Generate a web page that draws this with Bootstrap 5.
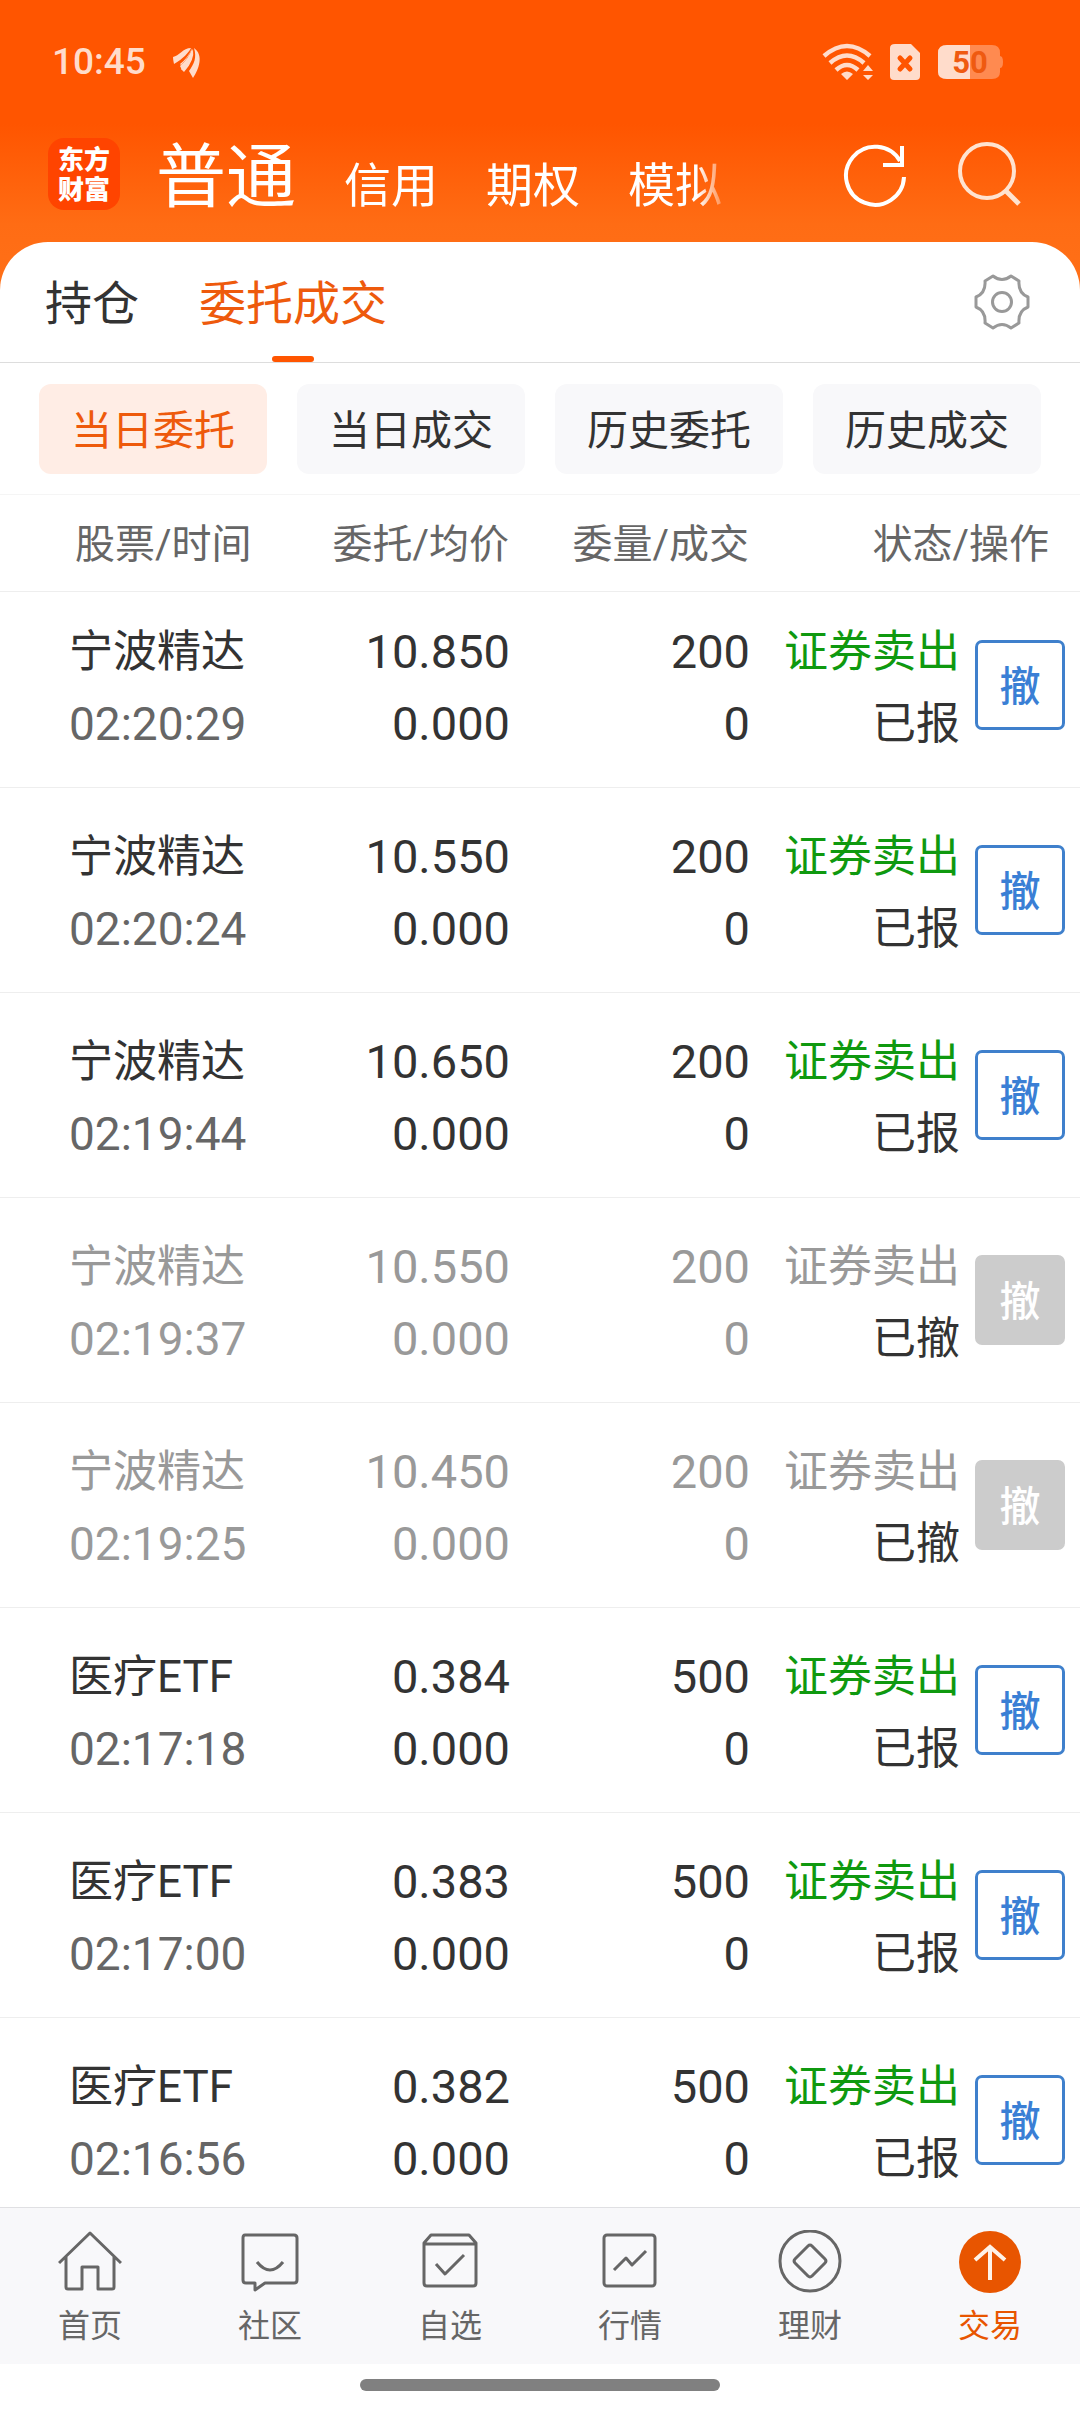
<!DOCTYPE html>
<html lang="zh-CN">
<head>
<meta charset="utf-8">
<meta name="viewport" content="width=device-width, initial-scale=1">
<title>委托成交</title>
<link href="https://cdn.jsdelivr.net/npm/bootstrap@5.3.0/dist/css/bootstrap.min.css" rel="stylesheet">
<style>
body{font-family:Roboto,"Noto Sans CJK SC",sans-serif;color:#333;background:#fff;font-size:44px;line-height:72px}
a{text-decoration:none;color:inherit}
svg{display:block;flex:none}
.top-area{background:linear-gradient(#f50 0,#f50 124px,#ff6c14 224px,#ff7018 290px);color:#fff}
.status-bar{height:124px;padding:0 76px 43px 52px;color:#ffdccb}
.clock{font-size:37px;font-weight:500;line-height:38px}
.app-bar{height:118px;padding:0 58px 18px 48px}
.brand-logo{width:72px;height:72px;padding-top:2px;border-radius:16px;background:#f40;font-size:26px;font-weight:900;line-height:30px}
.modes{margin-left:36px;gap:48px;width:576px;height:118px;padding-top:13px;-webkit-mask-image:linear-gradient(90deg,#000 94%,transparent);mask-image:linear-gradient(90deg,#000 94%,transparent)}
.modes a{font-size:47px;line-height:100px;white-space:nowrap}
.modes a.active{font-size:70px}
.icon-btn{background:none;border:0;padding:0;color:inherit}
.sheet{background:#fff;border-radius:48px 48px 0 0;color:#333}
.tab-row{height:121px;padding:0 46px 0 45px;gap:60px;border-bottom:1px solid #ddd}
.tab-row a{font-size:47px;line-height:116px;padding-top:4px}
.tab-row a.active{color:#ee5a0c;position:relative}
.tab-row a.active::after{content:"";position:absolute;left:50%;bottom:0;width:42px;height:6px;margin-left:-21px;border-radius:3px;background:#f50}
.filter-row{padding:21px 39px 20px;gap:30px;border-bottom:1px solid #f5f5f5}
.filter-row button{height:90px;border:0;border-radius:12px;background:#f8f8fa;color:#333;font-size:41px;line-height:60px;padding:4px 0 0}
.filter-row button.active{background:#ffede5;color:#ee5a0c}
.orders{table-layout:fixed;width:100%;border-collapse:separate;border-spacing:0}
.orders th{font-size:40px;font-weight:400;line-height:60px;color:#666;padding:20px 1px 16px 0;border-bottom:1px solid #eee;text-align:right;white-space:nowrap}
.orders td{padding:33px 0 27px 0;border-bottom:1px solid #eee;text-align:right;white-space:nowrap;vertical-align:top}
.orders tbody tr:first-child td{padding-top:24px}
.orders th:first-child{text-align:left;padding-left:75px}
.orders td:first-child{text-align:left;padding-left:69px}
.orders th:last-child{padding-right:31px}
.orders td:last-child{padding-right:15px}
.num{font-size:47px}
.stamp{color:#666;font-size:46px}
.sell{color:#0f990f}
.gone td,.gone .stamp,.gone .sell{color:#999}
.gone .state{color:#333}
.cancel{width:90px;height:90px;margin-top:24px;border:3px solid #3f80cc;border-radius:7px;background:#fff;color:#3a7fd5;font-size:41px;font-weight:500;line-height:60px;padding:4px 0 0;display:inline-block;vertical-align:top}
.cancel:disabled{background:#ccc;border-color:#ccc;color:#fff}
.dock{background:#fff}
.dock-items{background:#f8f8fa;border-top:1px solid #e0e0e3;height:157px;padding-top:22px;color:#666}
.dock-items a{font-size:32px;line-height:40px}
.dock-items svg{margin-bottom:12px}
.dock-items a.active{color:#e85500}
.home-bar{height:48px;padding-bottom:6px}
.home-bar span{width:33.333%;height:12px;border-radius:6px;background:#808080}
</style>
</head>
<body>
<header class="top-area">
  <div class="status-bar d-flex align-items-end justify-content-between">
    <div class="d-flex align-items-center">
      <span class="clock">10:45</span>
      <svg class="ms-4" width="36" height="36" viewBox="4 0 36 36" fill="currentColor"><path d="M7 13C13 12 17 4 25 4C23 8 17 15 8 20Q7 16 7 13z"/><path d="M26 5C29 10 21 19 16 26L14 22Q23 14 26 5z"/><path d="M14 20Q22 14 26 4Q24 12 15 21z"/><path d="M28 4C38 11 33 25 27 34L23 27C28 20 31 14 28 4z"/><path d="M27 5Q29 16 18 28L15 25Q24 16 27 5z"/></svg>
    </div>
    <div class="d-flex align-items-center">
      <svg width="52" height="38" viewBox="0 0 52 38" fill="none" stroke="currentColor" stroke-width="4.500"><path d="M2 13Q25-7 48 13M8 20Q25 5 42 20M14 27Q25 17 36 27"/><path d="M25 37L19 31Q25 26 31 31zM46 22L51 28H41zM46 37L41 32H51z" fill="currentColor" stroke="none"/></svg>
      <svg class="ms-3" width="30" height="38" viewBox="0 0 30 38"><path d="M5 1H21L30 10V33Q30 37 26 37H4Q0 37 0 33V5Q0 1 5 1z" fill="currentColor"/><path d="M10 15L20 26M20 15L10 26" stroke="#f50" stroke-width="5" stroke-linecap="round"/></svg>
      <svg class="ms-3" width="68" height="38" viewBox="0 0 68 38"><path d="M11 2H56Q64 2 64 10V13Q67 13 67 19T64 25V29Q64 36 56 36H11Q2 36 2 29V10Q2 2 11 2z" fill="#ff8a50"/><path d="M34 2H11Q2 2 2 10V29Q2 36 11 36H34z" fill="currentColor"/><text x="34" y="30" text-anchor="middle" font-family="Roboto,sans-serif" font-weight="700" font-size="31" fill="#ef5a10">50</text></svg>
    </div>
  </div>
  <div class="app-bar d-flex align-items-center">
    <a href="#" class="brand-logo d-flex flex-column align-items-center justify-content-center"><span>东方</span><span>财富</span></a>
    <nav class="modes d-flex align-items-baseline">
      <a href="#" class="active">普通</a><a href="#">信用</a><a href="#">期权</a><a href="#">模拟</a>
    </nav>
    <div class="d-flex ms-auto gap-5">
      <button class="icon-btn" aria-label="刷新"><svg width="66" height="66" viewBox="0 0 66 66" fill="none" stroke="currentColor" stroke-width="4"><path d="M62 36A29 29 0 1 1 58 20"/><path d="M60 5V24H41"/></svg></button>
      <button class="icon-btn" aria-label="搜索"><svg width="66" height="66" viewBox="0 0 66 66" fill="none" stroke="#ffe3d0" stroke-width="4"><circle cx="31" cy="30" r="27"/><path d="M50 50L63 63" stroke-width="5"/></svg></button>
    </div>
  </div>
  <div class="sheet tab-row d-flex align-items-center">
    <a href="#">持仓</a><a href="#" class="active">委托成交</a>
    <button class="icon-btn ms-auto" aria-label="设置"><svg width="64" height="64" viewBox="0 0 64 64" fill="none" stroke="#999" stroke-width="3" stroke-linejoin="round"><path d="M23 6Q32 13 41 6L49 11Q48 23 58 27V37Q48 41 49 53L41 58Q32 51 23 58L15 53Q16 41 6 37V27Q16 23 15 11z"/><circle cx="32" cy="32" r="9.500"/></svg></button>
  </div>
</header>
<main>
  <div class="filter-row d-flex">
    <button class="flex-fill active">当日委托</button><button class="flex-fill">当日成交</button><button class="flex-fill">历史委托</button><button class="flex-fill">历史成交</button>
  </div>
  <table class="orders">
    <colgroup><col style="width:25%"><col style="width:22.222%"><col style="width:22.222%"><col style="width:19.444%"><col></colgroup>
    <thead><tr><th>股票/时间</th><th>委托/均价</th><th>委量/成交</th><th colspan="2">状态/操作</th></tr></thead>
    <tbody>
      <tr><td><div>宁波精达</div><div class="stamp">02:20:29</div></td><td class="num"><div>10.850</div><div>0.000</div></td><td class="num"><div>200</div><div>0</div></td><td><div class="sell">证券卖出</div><div class="state">已报</div></td><td><button class="cancel">撤</button></td></tr>
      <tr><td><div>宁波精达</div><div class="stamp">02:20:24</div></td><td class="num"><div>10.550</div><div>0.000</div></td><td class="num"><div>200</div><div>0</div></td><td><div class="sell">证券卖出</div><div class="state">已报</div></td><td><button class="cancel">撤</button></td></tr>
      <tr><td><div>宁波精达</div><div class="stamp">02:19:44</div></td><td class="num"><div>10.650</div><div>0.000</div></td><td class="num"><div>200</div><div>0</div></td><td><div class="sell">证券卖出</div><div class="state">已报</div></td><td><button class="cancel">撤</button></td></tr>
      <tr class="gone"><td><div>宁波精达</div><div class="stamp">02:19:37</div></td><td class="num"><div>10.550</div><div>0.000</div></td><td class="num"><div>200</div><div>0</div></td><td><div class="sell">证券卖出</div><div class="state">已撤</div></td><td><button class="cancel" disabled>撤</button></td></tr>
      <tr class="gone"><td><div>宁波精达</div><div class="stamp">02:19:25</div></td><td class="num"><div>10.450</div><div>0.000</div></td><td class="num"><div>200</div><div>0</div></td><td><div class="sell">证券卖出</div><div class="state">已撤</div></td><td><button class="cancel" disabled>撤</button></td></tr>
      <tr><td><div>医疗ETF</div><div class="stamp">02:17:18</div></td><td class="num"><div>0.384</div><div>0.000</div></td><td class="num"><div>500</div><div>0</div></td><td><div class="sell">证券卖出</div><div class="state">已报</div></td><td><button class="cancel">撤</button></td></tr>
      <tr><td><div>医疗ETF</div><div class="stamp">02:17:00</div></td><td class="num"><div>0.383</div><div>0.000</div></td><td class="num"><div>500</div><div>0</div></td><td><div class="sell">证券卖出</div><div class="state">已报</div></td><td><button class="cancel">撤</button></td></tr>
      <tr><td><div>医疗ETF</div><div class="stamp">02:16:56</div></td><td class="num"><div>0.382</div><div>0.000</div></td><td class="num"><div>500</div><div>0</div></td><td><div class="sell">证券卖出</div><div class="state">已报</div></td><td><button class="cancel">撤</button></td></tr>
    </tbody>
  </table>
</main>
<footer class="dock fixed-bottom">
  <nav class="dock-items row g-0 flex-nowrap text-center">
    <a href="#" class="col d-flex flex-column align-items-center"><svg width="64" height="64" viewBox="0 0 64 64" fill="none" stroke="currentColor" stroke-width="3" stroke-linejoin="round"><path d="M1 33L32 3L63 33M8 27V57Q8 59 10 59H24V37H40V59H54Q56 59 56 57V27"/></svg>首页</a>
    <a href="#" class="col d-flex flex-column align-items-center"><svg width="64" height="64" viewBox="0 0 64 64" fill="none" stroke="currentColor" stroke-width="3" stroke-linejoin="round"><path d="M7 5H56Q59 5 59 8V50Q59 53 56 53H27L17 60V53H8Q5 53 5 50V8Q5 5 7 5z"/><path d="M19 32Q32 48 45 32"/></svg>社区</a>
    <a href="#" class="col d-flex flex-column align-items-center"><svg width="64" height="64" viewBox="0 0 64 64" fill="none" stroke="currentColor" stroke-width="3" stroke-linejoin="round"><path d="M13 5H51L58 13V53Q58 56 55 56H9Q6 56 6 53V13zM6 14H58M18 34L27 44L46 25"/></svg>自选</a>
    <a href="#" class="col d-flex flex-column align-items-center"><svg width="64" height="64" viewBox="0 0 64 64" fill="none" stroke="currentColor" stroke-width="3" stroke-linejoin="round"><rect x="6" y="5" width="51" height="51" rx="3"/><path d="M16 40L28 28L34 35L48 21"/></svg>行情</a>
    <a href="#" class="col d-flex flex-column align-items-center"><svg width="64" height="64" viewBox="0 0 64 64" fill="none" stroke="currentColor" stroke-width="3" stroke-linejoin="round"><circle cx="32" cy="31" r="30"/><path d="M34 16L47 29Q49 31 47 33L34 46Q32 48 30 46L17 33Q15 31 17 29L30 16Q32 14 34 16z"/></svg>理财</a>
    <a href="#" class="col d-flex flex-column align-items-center active"><svg width="64" height="64" viewBox="0 0 64 64" fill="none" stroke="#fff3e8" stroke-width="4"><circle cx="32" cy="32" r="31" fill="#e85500" stroke="none"/><path d="M32 17V50M17 30L32 17L47 30"/></svg>交易</a>
  </nav>
  <div class="home-bar d-flex align-items-center justify-content-center"><span></span></div>
</footer>
<script src="https://cdn.jsdelivr.net/npm/bootstrap@5.3.0/dist/js/bootstrap.bundle.min.js"></script>
</body>
</html>
